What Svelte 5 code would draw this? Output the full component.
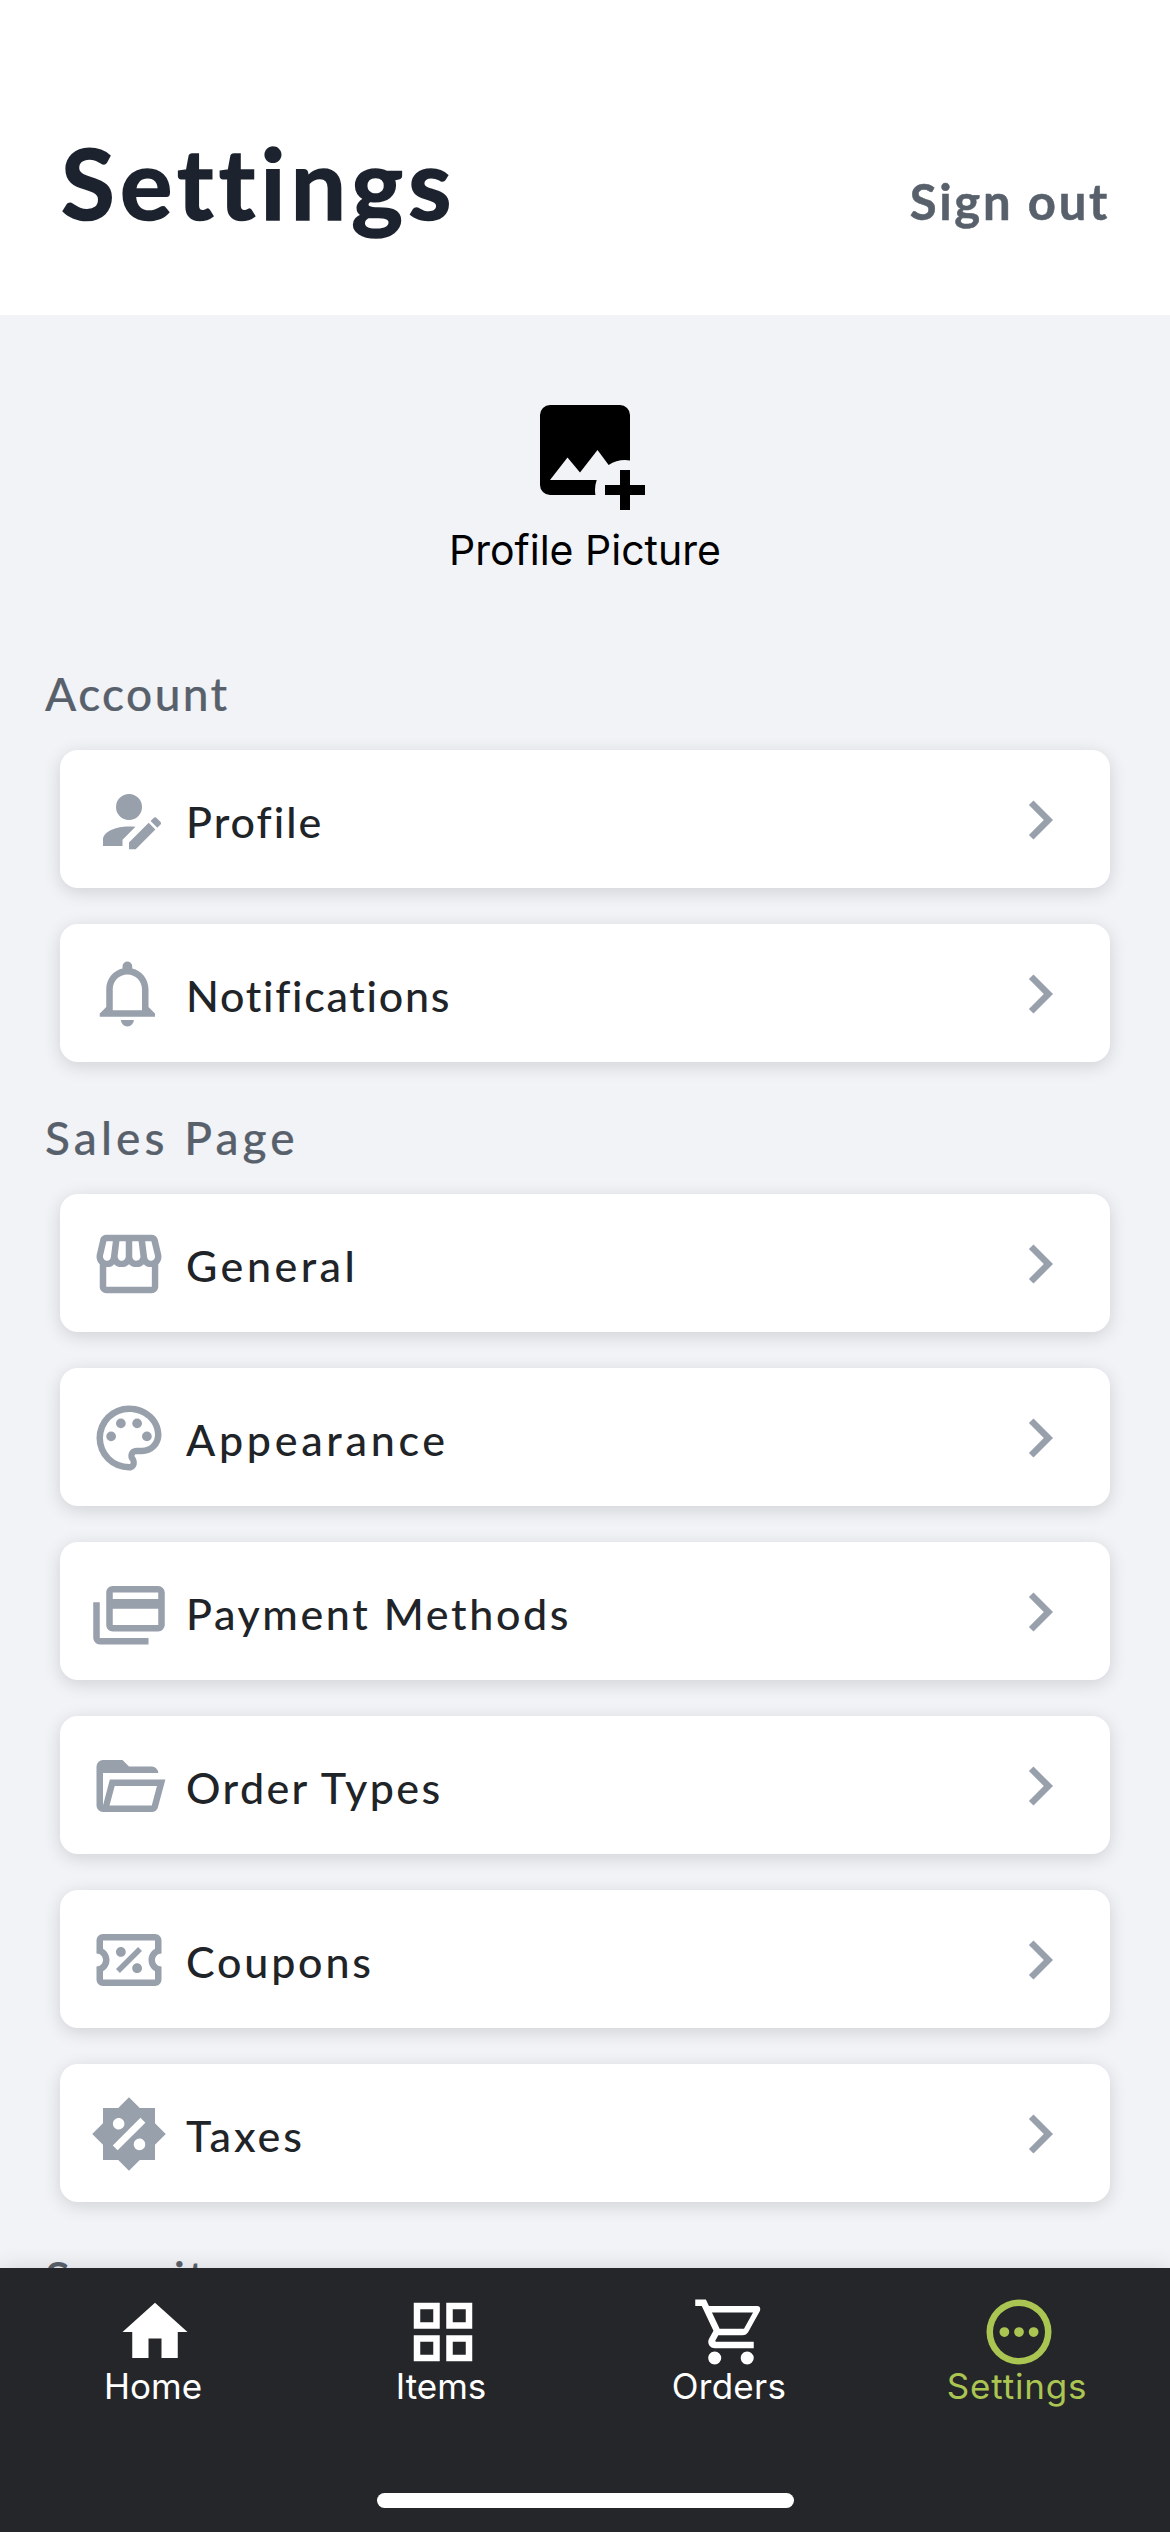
<script>
  const icons = {
    profile:
      'M21.7,13.35L20.7,14.35L18.65,12.3L19.65,11.3C19.86,11.09 20.21,11.09 20.42,11.3L21.7,12.58C21.91,12.79 21.91,13.14 21.7,13.35M12,18.94L18.06,12.88L20.11,14.93L14.06,21H12V18.94M12,14C7.58,14 4,15.79 4,18V20H10V18.11L14,14.11C13.34,14.03 12.67,14 12,14M12,4A4,4 0 0,0 8,8A4,4 0 0,0 12,12A4,4 0 0,0 16,8A4,4 0 0,0 12,4Z',
    bell:
      'M16,17H7V10.5C7,8 9,6 11.5,6C14,6 16,8 16,10.5M18,16V10.5C18,7.43 15.86,4.86 13,4.18V3.5A1.5,1.5 0 0,0 11.5,2A1.5,1.5 0 0,0 10,3.5V4.18C7.13,4.86 5,7.43 5,10.5V16L3,18V19H20V18M11.5,22A2,2 0 0,0 13.5,20H9.5A2,2 0 0,0 11.5,22Z',
    store:
      'M5.06 3C4.63 3 4.22 3.14 3.84 3.42S3.24 4.06 3.14 4.5L2.11 8.91C1.86 10 2.06 10.92 2.72 11.77L3 12.05V19C3 19.5 3.2 20 3.61 20.39S4.5 21 5 21H19C19.5 21 20 20.8 20.39 20.39S21 19.5 21 19V12.05L21.28 11.77C21.94 10.92 22.14 10 21.89 8.91L20.86 4.5C20.73 4.06 20.5 3.7 20.13 3.42C19.77 3.14 19.38 3 18.94 3H5.06M18.89 4.97L19.97 9.38C20.06 9.81 19.97 10.2 19.69 10.55C19.44 10.86 19.13 11 18.75 11C18.44 11 18.17 10.9 17.95 10.66C17.73 10.43 17.61 10.16 17.58 9.84L16.97 5L18.89 4.97M5.06 5H7.03L6.42 9.84C6.3 10.63 5.91 11 5.25 11C4.84 11 4.53 10.86 4.31 10.55C4.03 10.2 3.94 9.81 4.03 9.38L5.06 5M9.05 5H11V9.7C11 10.05 10.89 10.35 10.64 10.62C10.39 10.88 10.08 11 9.7 11C9.36 11 9.07 10.88 8.84 10.59S8.5 10 8.5 9.66V9.5L9.05 5M13 5H14.95L15.5 9.5C15.58 9.92 15.5 10.27 15.21 10.57C14.95 10.87 14.61 11 14.2 11C13.89 11 13.61 10.88 13.36 10.62C13.11 10.35 13 10.05 13 9.7V5M7.45 12.05C8.08 12.65 8.86 13 9.8 12.95C10.64 12.95 11.38 12.65 12 12.05C12.69 12.65 13.45 13 14.3 12.95C15.17 13 15.92 12.65 16.55 12.05C17.11 12.65 17.86 13 18.8 12.95H19.03V19H5V12.95H5.25C6.16 13 6.89 12.65 7.45 12.05Z',
    palette:
      'M12,22A10,10 0 0,1 2,12A10,10 0 0,1 12,2C17.5,2 22,6 22,11A6,6 0 0,1 16,17H14.2C13.9,17 13.7,17.2 13.7,17.5C13.7,17.6 13.8,17.7 13.8,17.8C14.2,18.3 14.4,18.9 14.4,19.5C14.5,20.9 13.4,22 12,22M12,4A8,8 0 0,0 4,12A8,8 0 0,0 12,20C12.3,20 12.5,19.8 12.5,19.5C12.5,19.3 12.4,19.2 12.4,19.1C12,18.6 11.8,18.1 11.8,17.5C11.8,16.1 12.9,15 14.3,15H16A4,4 0 0,0 20,11C20,7.1 16.4,4 12,4M6.5,10A1.5,1.5 0 0,1 8,11.5A1.5,1.5 0 0,1 6.5,13A1.5,1.5 0 0,1 5,11.5A1.5,1.5 0 0,1 6.5,10M9.5,6A1.5,1.5 0 0,1 11,7.5A1.5,1.5 0 0,1 9.5,9A1.5,1.5 0 0,1 8,7.5A1.5,1.5 0 0,1 9.5,6M14.5,6A1.5,1.5 0 0,1 16,7.5A1.5,1.5 0 0,1 14.5,9A1.5,1.5 0 0,1 13,7.5A1.5,1.5 0 0,1 14.5,6M17.5,10A1.5,1.5 0 0,1 19,11.5A1.5,1.5 0 0,1 17.5,13A1.5,1.5 0 0,1 16,11.5A1.5,1.5 0 0,1 17.5,10Z',
    cards:
      'M21,8V6H7V8H21M21,16V11H7V16H21M21,4A2,2 0 0,1 23,6V16A2,2 0 0,1 21,18H7C5.89,18 5,17.1 5,16V6C5,4.89 5.89,4 7,4H21M3,20H18V22H3A2,2 0 0,1 1,20V9H3V20Z',
    folder:
      'M6.1,10L4,18V8H21A2,2 0 0,0 19,6H12L10,4H4A2,2 0 0,0 2,6V18A2,2 0 0,0 4,20H19C19.9,20 20.7,19.4 20.9,18.5L23.2,10H6.1M19,18H6L7.6,12H20.6L19,18Z',
    ticket:
      'M14.8 8L16 9.2L9.2 16L8 14.8L14.8 8M4 4H20C21.11 4 22 4.89 22 6V10C20.9 10 20 10.9 20 12C20 13.11 20.9 14 22 14V18C22 19.11 21.11 20 20 20H4C2.9 20 2 19.11 2 18V14C3.11 14 4 13.11 4 12C4 10.9 3.11 10 2 10V6C2 4.89 2.9 4 4 4M4 6V8.54C5.24 9.26 6 10.57 6 12C6 13.43 5.24 14.75 4 15.46V18H20V15.46C18.76 14.74 18 13.43 18 12C18 10.57 18.76 9.25 20 8.54V6H4M9.5 8C10.33 8 11 8.67 11 9.5C11 10.33 10.33 11 9.5 11C8.67 11 8 10.33 8 9.5C8 8.67 8.67 8 9.5 8M14.5 13C15.33 13 16 13.67 16 14.5C16 15.33 15.33 16 14.5 16C13.67 16 13 15.33 13 14.5C13 13.67 13.67 13 14.5 13Z',
    percent:
      'M20,8.69V4H15.31L12,0.69L8.69,4H4V8.69L.69,12L4,15.31V20H8.69L12,23.31L15.31,20H20V15.31L23.31,12L20,8.69M8.83,7.05C9.81,7.05 10.6,7.84 10.6,8.83A1.77,1.77 0 0,1 8.83,10.6C7.84,10.6 7.05,9.81 7.05,8.83C7.05,7.84 7.84,7.05 8.83,7.05M15.22,17C14.24,17 13.45,16.16 13.45,15.17A1.77,1.77 0 0,1 15.22,13.4C16.2,13.4 17,14.19 17,15.17A1.77,1.77 0 0,1 15.22,17M8.5,17.03L7,15.53L15.53,7L17.03,8.5L8.5,17.03Z',
    chevron: 'M8.59,16.58L13.17,12L8.59,7.41L10,6L16,12L10,18L8.59,16.58Z',
    imagePlus:
      'M5 3A2 2 0 0 0 3 5V19A2 2 0 0 0 5 21H14.09A6 6 0 0 1 14 20A6 6 0 0 1 14.34 18H5L8.5 13.5L11 16.5L14.5 12L16.73 15A6 6 0 0 1 20 14A6 6 0 0 1 21 14.09V5A2 2 0 0 0 19 3H5M19 16V19H16V21H19V24H21V21H24V19H21V16H19Z',
    home: 'M10,20V14H14V20H19V12H22L12,3L2,12H5V20H10Z',
    grid: 'M3 3H11V11H3ZM5 5V9H9V5ZM13 3H21V11H13ZM15 5V9H19V5ZM3 13H11V21H3ZM5 15V19H9V15ZM13 13H21V21H13ZM15 15V19H19V15Z',
    cart: 'M17,18A2,2 0 0,1 19,20A2,2 0 0,1 17,22C15.89,22 15,21.1 15,20C15,18.89 15.89,18 17,18M1,2H4.27L5.21,4H20A1,1 0 0,1 21,5C21,5.17 20.95,5.34 20.88,5.5L17.3,11.97C16.96,12.58 16.3,13 15.55,13H8.1L7.2,14.63L7.17,14.75A0.25,0.25 0 0,0 7.42,15H19V17H7C5.89,17 5,16.1 5,15C5,14.65 5.09,14.32 5.24,14.04L6.6,11.59L3,4H1V2M7,18A2,2 0 0,1 9,20A2,2 0 0,1 7,22C5.89,22 5,21.1 5,20C5,18.89 5.89,18 7,18M16,11L18.78,6H6.14L8.5,11H16Z',
    dots: 'M12,2A10,10 0 0,1 22,12A10,10 0 0,1 12,22A10,10 0 0,1 2,12A10,10 0 0,1 12,2M12,4A8,8 0 0,0 4,12A8,8 0 0,0 12,20A8,8 0 0,0 20,12A8,8 0 0,0 12,4M12,10.5A1.5,1.5 0 0,1 13.5,12A1.5,1.5 0 0,1 12,13.5A1.5,1.5 0 0,1 10.5,12A1.5,1.5 0 0,1 12,10.5M7.5,10.5A1.5,1.5 0 0,1 9,12A1.5,1.5 0 0,1 7.5,13.5A1.5,1.5 0 0,1 6,12A1.5,1.5 0 0,1 7.5,10.5M16.5,10.5A1.5,1.5 0 0,1 18,12A1.5,1.5 0 0,1 16.5,13.5A1.5,1.5 0 0,1 15,12A1.5,1.5 0 0,1 16.5,10.5Z',
  };

  // tracking: letter spacing in px, tuned for each string
  const sections = [
    {
      title: 'Account',
      tracking: 2.4,
      items: [
        { label: 'Profile', icon: 'profile', tracking: 2 },
        { label: 'Notifications', icon: 'bell', tracking: 1.7 },
      ],
    },
    {
      title: 'Sales Page',
      tracking: 4.1,
      items: [
        { label: 'General', icon: 'store', tracking: 3.5 },
        { label: 'Appearance', icon: 'palette', tracking: 3.7 },
        { label: 'Payment Methods', icon: 'cards', tracking: 2.6 },
        { label: 'Order Types', icon: 'folder', tracking: 2.4 },
        { label: 'Coupons', icon: 'ticket', tracking: 2.8 },
        { label: 'Taxes', icon: 'percent', tracking: 2.9 },
      ],
    },
    { title: 'Security', tracking: 3, items: [] },
  ];

  const tabs = [
    { label: 'Home', icon: 'home', tracking: 0 },
    { label: 'Items', icon: 'grid', tracking: 0 },
    { label: 'Orders', icon: 'cart', tracking: 0.3 },
    { label: 'Settings', icon: 'dots', tracking: 0.8 },
  ];
  let active = $state('Settings');
</script>

{#snippet icon(name)}
  <svg class="icon" viewBox="0 0 24 24" aria-hidden="true">
    <path d={icons[name]} fill="currentColor" fill-rule="evenodd" />
  </svg>
{/snippet}

<div class="screen">
  <header>
    <h1>Settings</h1>
    <button class="signout">Sign out</button>
  </header>

  <main>
    <button class="picture">
      {@render icon('imagePlus')}
      <span>Profile Picture</span>
    </button>

    {#each sections as section}
      <section>
        <h2 style:letter-spacing="{section.tracking}px">{section.title}</h2>
        <div class="list">
          {#each section.items as item}
            <button class="card">
              {@render icon(item.icon)}
              <span class="label" style:letter-spacing="{item.tracking}px">{item.label}</span>
              {@render icon('chevron')}
            </button>
          {/each}
        </div>
      </section>
    {/each}
  </main>

  <nav>
    <div class="tabs">
      {#each tabs as tab}
        <button class="tab" class:active={active === tab.label} onclick={() => (active = tab.label)}>
          {@render icon(tab.icon)}
          <span style:letter-spacing="{tab.tracking}px">{tab.label}</span>
        </button>
      {/each}
    </div>
    <div class="indicator"></div>
  </nav>
</div>

<style>
  :global(body) {
    margin: 0;
  }
  .screen {
    display: flex;
    flex-direction: column;
    width: 1170px;
    height: 2532px;
    overflow: hidden;
    background: #f1f3f7;
    font-family: Lato, 'Open Sans', sans-serif;
  }
  button {
    display: flex;
    margin: 0;
    padding: 0;
    border: 0;
    background: none;
    font: inherit;
    color: inherit;
    text-align: left;
  }
  .icon {
    display: block;
    flex: none;
    width: 78px;
    height: 78px;
  }
  header {
    display: flex;
    flex: none;
    align-items: baseline;
    justify-content: space-between;
    box-sizing: border-box;
    height: 315px;
    padding: 122px 60px 0 61px;
    background: #fff;
  }
  h1 {
    margin: 0;
    font-size: 98px;
    line-height: 120px;
    font-weight: 700;
    letter-spacing: 5.3px;
    color: #1c232e;
    -webkit-text-stroke: 1.6px currentColor;
  }
  .signout {
    font-size: 49px;
    line-height: 60px;
    font-weight: 700;
    letter-spacing: 2.7px;
    color: #58616b;
    -webkit-text-stroke: 0.5px currentColor;
  }
  main {
    flex: 1;
    min-height: 0;
    overflow: hidden;
  }
  .picture {
    flex-direction: column;
    align-items: center;
    width: 100%;
    padding-top: 75px;
    font-family: Inter, sans-serif;
    font-size: 41px;
    line-height: 50px;
    color: #000;
  }
  .picture .icon {
    width: 120px;
    height: 120px;
    margin-bottom: 15px;
  }
  section:first-of-type {
    margin-top: 87px;
  }
  h2 {
    margin: 0;
    padding: 44px 45px 25px;
    font-size: 46px;
    line-height: 63px;
    font-weight: 500;
    color: #58616b;
    -webkit-text-stroke: 0.2px currentColor;
  }
  section:first-of-type h2 {
    padding-top: 0;
  }
  .list {
    display: grid;
    gap: 36px;
    padding: 0 60px;
  }
  .card {
    align-items: center;
    box-sizing: border-box;
    height: 138px;
    padding: 1px 31px 0 30px;
    border-radius: 18px;
    background: #fff;
    box-shadow: 0 4px 18px rgba(0, 0, 0, 0.14);
    color: #98a0ac;
  }
  .label {
    flex: 1;
    padding: 4px 0 0 18px;
    font-size: 43px;
    line-height: 52px;
    font-weight: 500;
    color: #1f2428;
  }
  nav {
    display: flex;
    flex: none;
    flex-direction: column;
    align-items: center;
    justify-content: space-between;
    box-sizing: border-box;
    height: 264px;
    padding: 25px 0 24px;
    background: #25262a;
    box-shadow: 0 0 22px rgba(0, 0, 0, 0.12);
    z-index: 1;
  }
  .tabs {
    display: grid;
    grid-template-columns: repeat(4, 288px);
  }
  .tab {
    flex-direction: column;
    align-items: center;
    font-family: Inter, sans-serif;
    font-size: 35px;
    line-height: 42px;
    color: #fff;
  }
  .tab .icon {
    margin: 0 0 -6px 4px;
  }
  .tab.active {
    color: #aac551;
  }
  .indicator {
    width: 417px;
    height: 15px;
    border-radius: 8px;
    background: #fff;
  }
</style>
